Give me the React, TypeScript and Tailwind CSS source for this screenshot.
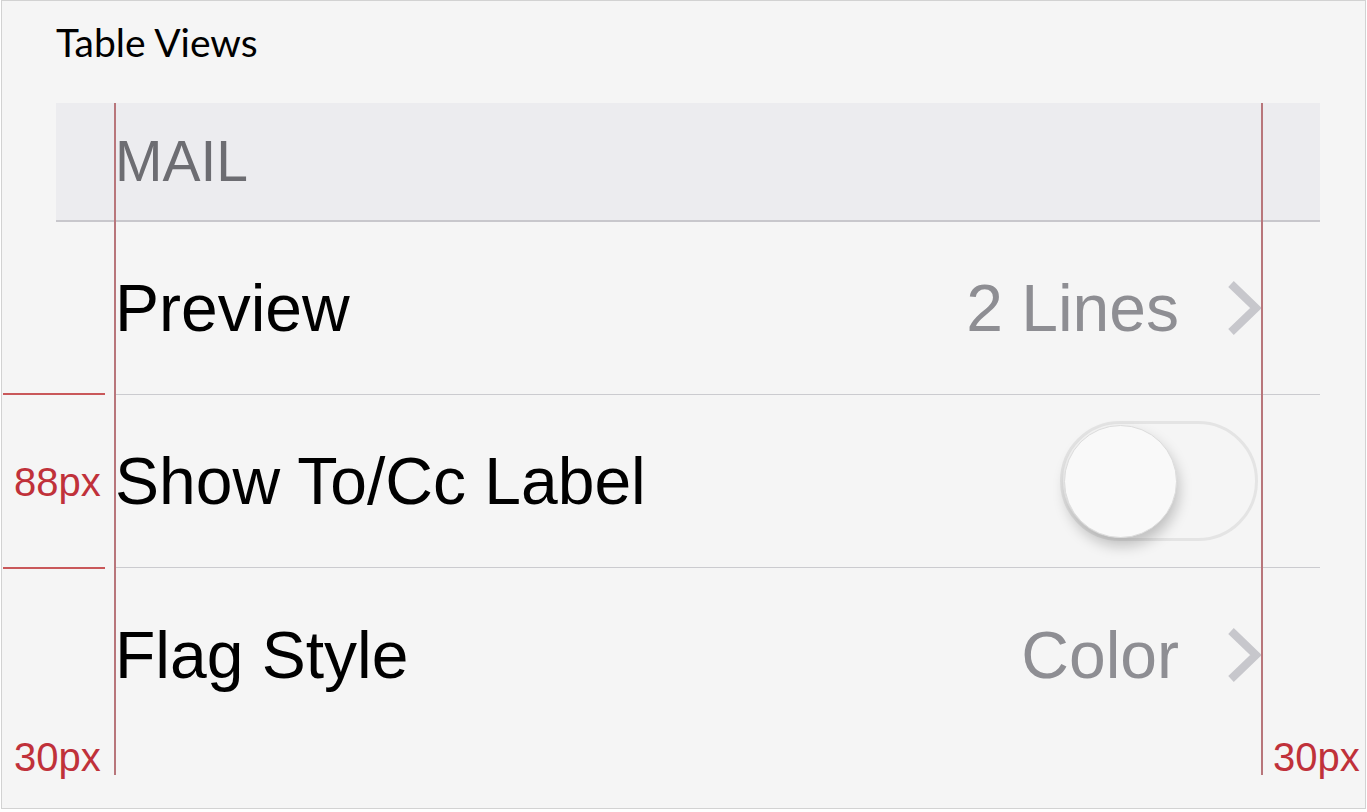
import React from 'react';

const Chevron = () => (
    <svg width="34" height="56" viewBox="0 0 34 56" className="shrink-0">
        <path d="M4 4 L29 28 L4 52" fill="none" stroke="#c7c7cc" strokeWidth="8" />
    </svg>
);

const Toggle = () => (
    <div className="w-[198px] h-[120px] rounded-full border-[3px] border-[#e4e4e4] bg-[#f5f5f5] flex items-center pl-px shrink-0">
        <div className="w-[113px] h-[113px] rounded-full bg-[#f9f9f9] border border-[#dcdcdc] shadow-[2px_8px_14px_rgba(0,0,0,0.22)]" />
    </div>
);

type RowProps = {
    label: string;
    value?: string;
    toggle?: boolean;
    last?: boolean;
};

const Row = ({ label, value, toggle, last }: RowProps) => (
    <div className="pl-[58px]">
        <div className={`h-[173px] flex items-center justify-between ${last ? '' : 'border-b border-[#cbcbcf]'} ${toggle ? 'pr-[62px]' : 'pr-[59px]'}`}>
            <span className="ml-px text-[66px] leading-none text-black">{label}</span>
            {toggle ? (
                <Toggle />
            ) : (
                <div className="flex items-center gap-[48px]">
                    <span className="text-[66px] leading-none text-[#8e8e93]">{value}</span>
                    <Chevron />
                </div>
            )}
        </div>
    </div>
);

export default function App() {
    return (
        <div className="w-[1367px] h-[812px] bg-white" style={{ fontFamily: '"Liberation Sans", Arial, sans-serif' }}>
            <div className="relative ml-px w-[1365px] h-[809px] border border-[#d2d2d2] bg-[#f5f5f5] overflow-hidden">
                {/* Title */}
                <div className="ml-[54px] pt-[22px] text-[39px] leading-none text-black" style={{ fontFamily: 'Lato, "Open Sans", sans-serif' }}>
                    Table Views
                </div>

                {/* Table */}
                <div className="ml-[54px] mt-[41px] w-[1264px]">
                    <div className="h-[119px] bg-[#ececef] border-b-2 border-[#c8c7cc] flex items-center pl-[59px]">
                        <span className="text-[57px] leading-none text-[#6d6d72]">MAIL</span>
                    </div>
                    <Row label="Preview" value="2 Lines" />
                    <Row label="Show To/Cc Label" toggle />
                    <Row label="Flag Style" value="Color" last />
                </div>

                {/* Spec annotations */}
                <div className="absolute left-[112px] top-[102px] w-[2px] h-[672px] bg-[#b8767b]" />
                <div className="absolute left-[1259px] top-[102px] w-[2px] h-[672px] bg-[#b8767b]" />
                <div className="absolute left-px top-[392px] w-[102px] h-[2px] bg-[#c9585a]" />
                <div className="absolute left-px top-[566px] w-[102px] h-[2px] bg-[#c9585a]" />
                <span className="absolute left-[12px] top-[461px] text-[40px] leading-none text-[#c0313a]">88px</span>
                <span className="absolute left-[12px] top-[736px] text-[40px] leading-none text-[#c0313a]">30px</span>
                <span className="absolute left-[1271px] top-[736px] text-[40px] leading-none text-[#c0313a]">30px</span>
            </div>
        </div>
    );
}
